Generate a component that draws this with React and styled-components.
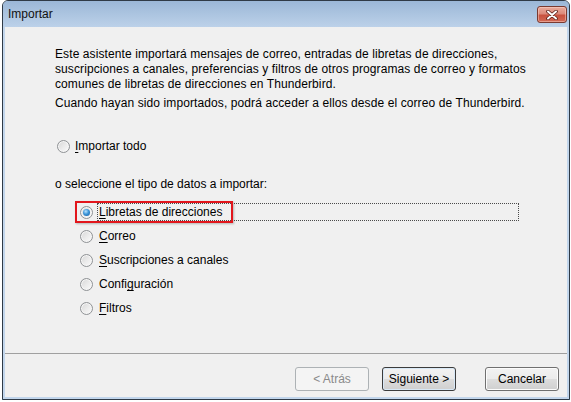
import styled, { createGlobalStyle, css } from 'styled-components';

const GlobalStyle = createGlobalStyle`
  html, body {
    margin: 0;
    padding: 0;
    background: #ffffff;
  }

  body {
    font-family: "Liberation Sans", Arial, sans-serif;
    font-size: 12px;
    color: #000;
  }
`;

const Window = styled.div`
  box-sizing: border-box;
  width: 568px;
  height: 400px;
  margin-left: 2px;
  display: flex;
  flex-direction: column;
  border: 1px solid #2f3a46;
  border-radius: 6px 6px 0 0;
  background: #c2d6ec;
  box-shadow: 0 2px 0 #46b3e3;
  overflow: hidden;
`;

const TitleBar = styled.div`
  height: 26px;
  flex: none;
  display: flex;
  align-items: flex-start;
  justify-content: space-between;
  padding: 0 2px 0 5px;
  background: linear-gradient(180deg, #9bb7d7 0%, #aac3df 45%, #bcd1e9 100%);
`;

const Title = styled.div`
  padding-top: 6px;
  line-height: 15px;
  color: #111;
`;

const CloseButton = styled.button`
  box-sizing: border-box;
  width: 30px;
  height: 17px;
  margin-top: 5px;
  padding: 0;
  display: flex;
  align-items: center;
  justify-content: center;
  border: 1px solid #7a3a30;
  border-radius: 3px;
  background: linear-gradient(180deg, #e9ab9c 0%, #dc8a7a 45%, #c8523f 55%, #d26a55 100%);
  box-shadow: inset 0 0 0 1px rgba(255, 220, 210, 0.45);
  cursor: default;
`;

const Frame = styled.div`
  flex: 1;
  display: flex;
  min-width: 0;
  padding: 0 2px 2px;
`;

const Panel = styled.div`
  flex: 1;
  min-width: 0;
  display: flex;
  flex-direction: column;
  background: #f0f0f0;
`;

const Main = styled.div`
  flex: 1;
  min-width: 0;
  padding: 20px 48px 0 50px;
`;

const Para = styled.p`
  margin: 0;
  line-height: 15px;
  letter-spacing: 0.1px;
  white-space: nowrap;

  & + & {
    margin-top: 4px;
  }
`;

const Key = styled.span`
  text-decoration: underline;
  text-underline-offset: 2px;
`;

const ImportAllRow = styled.div`
  margin-top: 26px;
  padding-left: 2px;
  display: flex;
  align-items: center;
  height: 18px;
  gap: 3px;
`;

const SelectLabel = styled.div`
  margin-top: 22px;
  line-height: 15px;
`;

const OptionList = styled.div`
  margin-top: 8px;
  padding-left: 25px;
  display: flex;
  flex-direction: column;
`;

const OptionRow = styled.div`
  position: relative;
  height: 24px;
  display: flex;
  align-items: center;
  gap: 4px;
`;

const Radio = styled.span`
  box-sizing: border-box;
  position: relative;
  width: 13px;
  height: 13px;
  flex: none;
  border-radius: 50%;
  border: 1px solid #8f9295;
  background: linear-gradient(135deg, #d6d6d6 0%, #ececec 55%, #fbfbfb 100%);
  box-shadow: inset 0 0 0 1px #f6f6f6;

  ${(p) =>
    p.$checked &&
    css`
      &::after {
        content: '';
        position: absolute;
        left: 2px;
        top: 2px;
        width: 7px;
        height: 7px;
        border-radius: 50%;
        background: radial-gradient(circle at 40% 35%, #b9e4ff 0%, #3c95d8 45%, #145a9e 100%);
      }
    `}
`;

const Label = styled.span`
  box-sizing: border-box;
  height: 18px;
  line-height: 16px;
  padding: 0 1px;
  border: 1px dotted ${(p) => (p.$focused ? '#4a4a4a' : 'transparent')};
  flex: ${(p) => (p.$focused ? '1' : 'none')};
  white-space: nowrap;
`;

const Highlight = styled.div`
  position: absolute;
  left: -5px;
  top: 1px;
  width: 158px;
  height: 22px;
  box-sizing: border-box;
  border: 2px solid #e2161c;
  box-shadow: 1px 1px 2px rgba(0, 0, 0, 0.25);
  pointer-events: none;
`;

const Footer = styled.div`
  height: 44px;
  flex: none;
  box-sizing: border-box;
  border-top: 1px solid #a0a0a0;
  display: flex;
  align-items: flex-start;
  justify-content: flex-end;
  padding: 13px 8px 0 0;
`;

const Button = styled.button`
  box-sizing: border-box;
  width: 74px;
  height: 24px;
  margin-left: ${(p) => p.$gap || 0}px;
  padding: 0;
  font-family: "Liberation Sans", Arial, sans-serif;
  font-size: 12px;
  color: #000;
  border: 1px solid ${(p) => (p.$default ? '#3c3c3c' : '#707070')};
  border-radius: 3px;
  background: linear-gradient(180deg, #f2f2f2 0%, #ebebeb 49%, #dddddd 50%, #cfcfcf 100%);
  box-shadow: inset 0 0 0 1px ${(p) => (p.$default ? '#d8e8f6' : '#fcfcfc')};
  cursor: default;

  &:disabled {
    color: #8a8a8a;
    border-color: #adb2b5;
    background: #f4f4f4;
    box-shadow: none;
  }
`;

const options = [
  { pre: '', key: 'L', post: 'ibretas de direcciones', checked: true },
  { pre: '', key: 'C', post: 'orreo' },
  { pre: '', key: 'S', post: 'uscripciones a canales' },
  { pre: 'Confi', key: 'g', post: 'uración' },
  { pre: '', key: 'F', post: 'iltros' },
];

function CloseGlyph() {
  return (
    <svg width="12" height="10" viewBox="0 0 12 10">
      <path d="M2 1.5 L10 8.5 M10 1.5 L2 8.5" stroke="#5a2019" strokeWidth="3.6" strokeLinecap="round" />
      <path d="M2 1.5 L10 8.5 M10 1.5 L2 8.5" stroke="#ffffff" strokeWidth="2" strokeLinecap="round" />
    </svg>
  );
}

export default function App() {
  return (
    <>
      <GlobalStyle />
      <Window>
        <TitleBar>
          <Title>Importar</Title>
          <CloseButton type="button">
            <CloseGlyph />
          </CloseButton>
        </TitleBar>
        <Frame>
          <Panel>
            <Main>
              <Para>
                Este asistente importará mensajes de correo, entradas de libretas de direcciones,
                <br />
                suscripciones a canales, preferencias y filtros de otros programas de correo y formatos
                <br />
                comunes de libretas de direcciones en Thunderbird.
              </Para>
              <Para>Cuando hayan sido importados, podrá acceder a ellos desde el correo de Thunderbird.</Para>

              <ImportAllRow>
                <Radio />
                <Label>
                  <Key>I</Key>mportar todo
                </Label>
              </ImportAllRow>

              <SelectLabel>o seleccione el tipo de datos a importar:</SelectLabel>

              <OptionList>
                {options.map((o) => (
                  <OptionRow key={o.post}>
                    <Radio $checked={o.checked} />
                    <Label $focused={o.checked}>
                      {o.pre}
                      <Key>{o.key}</Key>
                      {o.post}
                    </Label>
                    {o.checked && <Highlight />}
                  </OptionRow>
                ))}
              </OptionList>
            </Main>
            <Footer>
              <Button type="button" disabled>
                &lt; Atrás
              </Button>
              <Button type="button" $gap={13} $default>
                Siguiente &gt;
              </Button>
              <Button type="button" $gap={29}>
                Cancelar
              </Button>
            </Footer>
          </Panel>
        </Frame>
      </Window>
    </>
  );
}
